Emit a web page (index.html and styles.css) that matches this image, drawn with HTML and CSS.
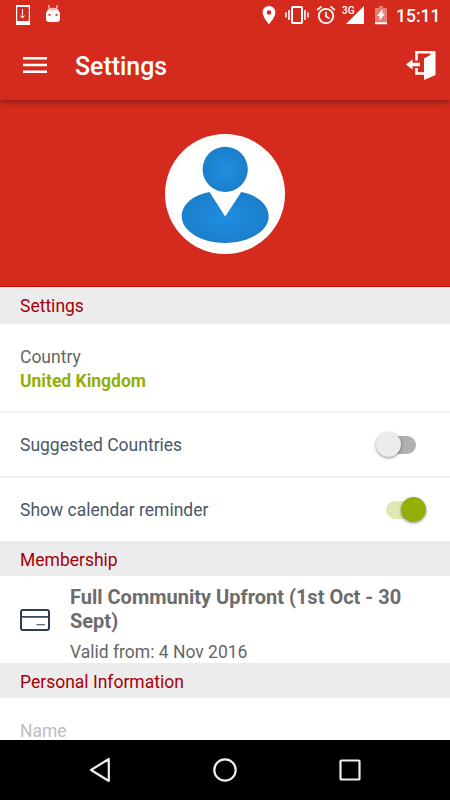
FILE: index.html
```html
<!DOCTYPE html>
<html lang="en">
<head>
<meta charset="utf-8">
<title>Settings</title>
<link rel="stylesheet" href="styles.css">
</head>
<body>
<div class="screen">
  <header class="top">
    <div class="status">
      <svg class="s-download" width="16" height="22" viewBox="0 0 16 22"><path fill="#fff" fill-rule="evenodd" d="M1 1h14v20H1zM2.200 3v14h11.600V3z"/><path stroke="#fff" stroke-width="1.100" d="M7.500 5v6.500"/><path fill="#fff" d="M4.800 11.200l2.700 1 2.700-1-2.700 3.200z"/></svg>
      <svg class="s-robot" width="16" height="20" viewBox="0 0 16 20"><path d="M3.500 1l1.200 4M12.500 1l-1.200 4" stroke="#f6c8c4" stroke-width="1.300"/><path fill="#fff" d="M3 5.500Q8 2.600 13 5.500L15 9v5.500Q15 18 11.500 18h-7Q1 18 1 14.500V9z"/><path fill="#f4b9b4" d="M3.500 5Q8 2.600 12.500 5v1.500h-9z"/><path fill="#d52b1e" d="M3.500 10h2v1.700h-2zM10.500 10h2v1.700h-2z"/></svg>
      <span class="fill"></span>
      <svg class="s-pin" width="14" height="20" viewBox="0 0 14 20"><path fill="#fff" fill-rule="evenodd" d="M7 1a6.400 6.400 0 0 0-6.400 6.400C.6 12 7 19.200 7 19.200S13.400 12 13.400 7.400A6.400 6.400 0 0 0 7 1zm0 4.200a2.300 2.300 0 1 1 0 4.600 2.300 2.300 0 0 1 0-4.600z"/></svg>
      <svg class="s-vibrate" width="24" height="20" viewBox="0 0 24 20"><rect x="7" y="2" width="10" height="16" rx=".7" fill="none" stroke="#fff" stroke-width="2"/><path stroke="#fff" stroke-width="1.600" d="M4 5v10M1 7.500v5M20 5v10M23 7.500v5"/></svg>
      <svg class="s-alarm" width="20" height="20" viewBox="0 0 20 20"><circle cx="10" cy="11" r="7.200" fill="none" stroke="#fff" stroke-width="1.800"/><path d="M10 6.800v4.700l3.500 2M1.200 5l4.300-3.600M18.800 5l-4.300-3.600" fill="none" stroke="#fff" stroke-width="1.700"/></svg>
      <span class="signal"><span class="net">3G</span><svg width="18" height="18" viewBox="0 0 18 18"><path fill="#fff" d="M18 0v18H0z"/></svg></span>
      <svg class="s-battery" width="12" height="19" viewBox="0 0 12 19"><path fill="#e77e76" d="M4 0h4v2h4v15H0V2h4z"/><path fill="#fff" d="M0 16.200h12V18.200H0zM7.500 3.200v4.600H10l-5.400 6.800V10H2z"/></svg>
      <span class="time">15:11</span>
    </div>
    <div class="bar">
      <svg class="menu" width="24" height="18" viewBox="0 0 24 18"><path stroke="#fff" stroke-width="2.400" d="M0 2.200h24M0 9h24M0 15.800h24"/></svg>
      <h1>Settings</h1>
      <svg class="exit" width="30" height="30" viewBox="0 0 30 30"><path fill="none" stroke="#fff" stroke-width="2.600" d="M10.500 10.500V2.300H28M10.500 18v5.500H18"/><path fill="#fff" d="M18 8.500L24.500 5V2.500L29.500 1v24L18 30zM0 14.500L6.500 9.500v3.300h7.500v3.400H6.500v3.300z"/></svg>
    </div>
  </header>
  <section class="hero">
    <div class="avatar">
      <svg width="120" height="120" viewBox="0 0 120 120">
        <defs><radialGradient id="blue"><stop offset="0" stop-color="#208ee0"/><stop offset="1" stop-color="#1b7fcb"/></radialGradient></defs>
        <circle cx="60" cy="60" r="56.500" fill="none" stroke="#f5eded" stroke-width=".6"/>
        <circle cx="60.200" cy="35.300" r="22.600" fill="url(#blue)"/>
        <path fill="url(#blue)" d="M44.500 58L60.200 82.500 76.200 58C93 61 103.700 71 103.700 82.500 103.700 97 84 109 60.200 109S16.700 97 16.700 82.500C16.700 71 27.500 61 44.500 58z"/>
      </svg>
    </div>
  </section>
  <main>
    <h2 class="first">Settings</h2>
    <div class="row country"><span>Country</span><strong>United Kingdom</strong></div>
    <div class="row option"><span>Suggested Countries</span><span class="switch off"><i></i></span></div>
    <div class="row option last"><span>Show calendar reminder</span><span class="switch on"><i></i></span></div>
    <h2>Membership</h2>
    <div class="member">
      <svg width="30" height="22" viewBox="0 0 30 22"><rect x="1" y="1" width="28" height="20" rx="2" fill="none" stroke="#2d3e50" stroke-width="2"/><path fill="none" stroke="#3b4a5b" stroke-width="1.800" d="M1 7.900h28"/><path stroke="#526070" stroke-width="1.200" d="M16.500 15.700H25"/></svg>
      <div class="details"><strong>Full Community Upfront (1st Oct - 30 Sept)</strong><span>Valid from: 4 Nov 2016</span></div>
    </div>
    <h2>Personal Information</h2>
    <div class="name">Name</div>
  </main>
  <nav>
    <svg width="26" height="26" viewBox="0 0 26 26"><path d="M21.800 2v22L4 13z" fill="none" stroke="#eee" stroke-width="2.200" stroke-linejoin="round"/></svg>
    <svg width="26" height="26" viewBox="0 0 26 26"><circle cx="13" cy="13" r="10.700" fill="none" stroke="#eee" stroke-width="2.200"/></svg>
    <svg width="26" height="26" viewBox="0 0 26 26"><rect x="3.500" y="3.500" width="19" height="19" rx=".8" fill="none" stroke="#eee" stroke-width="2.200"/></svg>
  </nav>
</div>
</body>
</html>
```

FILE: styles.css
```css
* { box-sizing: border-box; }
body { margin: 0; font-family: Roboto, "Liberation Sans", sans-serif; }
svg { display: block; flex: none; }
.screen { width: 450px; height: 800px; display: flex; flex-direction: column; overflow: hidden; background: #fff; }

.top { position: relative; z-index: 1; height: 100px; flex: none; background: #d52b1e; color: #fff; box-shadow: 0 2px 7px rgba(0, 0, 0, .4); }
.status { height: 30px; display: flex; align-items: flex-start; padding: 4px 0 0 15px; }
.s-robot { margin-left: 14px; }
.fill { flex: 1; }
.s-pin { margin: 1px 9px 0 0; }
.s-vibrate { margin: 1px 7px 0 0; }
.s-alarm { margin: 1px 6px 0 0; }
.signal { position: relative; width: 22px; height: 20px; padding: 2px 0 0 4px; margin-right: 11px; }
.net { position: absolute; left: 0; top: 2px; font-size: 10px; line-height: 10px; font-weight: 500; }
.s-battery { margin: 2px 9px 0 0; }
.time { width: 54px; font-size: 17.5px; font-weight: 500; line-height: 24px; }

.bar { height: 70px; display: flex; align-items: center; padding: 0 14px 0 23px; }
h1 { margin: 3px 0 0 28px; flex: 1; font-size: 24.9px; line-height: 30px; font-weight: 500; }
.exit { margin-top: -1px; }

.hero { height: 187px; flex: none; background: #d52b1e; padding-top: 34px; border-bottom: 1px solid #c80d05; }
.avatar { width: 120px; height: 120px; margin: 0 auto; border-radius: 50%; background: #fff; }

main { flex: 1; overflow: hidden; }
h2 { margin: 0; height: 35px; padding: 1px 0 0 20px; background: #ececec; color: #a50008; font-size: 17.5px; line-height: 36px; font-weight: 400; }
h2.first { height: 37px; line-height: 37px; }
.row { padding: 0 20px; border-bottom: 2px solid #f0f0f0; font-size: 17.5px; }
.country { height: 89px; padding-top: 21px; display: flex; flex-direction: column; line-height: 24px; color: #666; }
.country strong { color: #95ae08; }
.option { height: 65px; display: flex; align-items: center; justify-content: space-between; color: #4a5766; }
.option > span:first-child { padding-top: 1px; }
.last { height: 63px; border-bottom: 0; }
.switch { position: relative; width: 30px; height: 18px; border-radius: 9px; }
.switch i { position: absolute; top: -4px; width: 25px; height: 25px; border-radius: 50%; box-shadow: 0 1px 3px rgba(0, 0, 0, .45); }
.off { background: #b0b0b0; margin-right: 14px; }
.off i { left: -10px; background: #ececec; }
.on { background: #dfe7b3; margin-right: 14px; }
.on i { right: -10px; background: #95ae08; }

.member { height: 87px; display: flex; padding-left: 20px; }
.member svg { margin: 33px 20px 0 0; }
.details { width: 345px; padding-top: 9px; color: #6c6c6c; }
.details strong { display: block; font-size: 20px; line-height: 24px; }
.details span { display: block; margin-top: 7px; font-size: 17.5px; line-height: 24px; color: #666; }
.name { padding: 21px 20px 0; font-size: 17.5px; line-height: 24px; color: #bdbdbd; }

nav { height: 60px; flex: none; background: #000; display: flex; align-items: center; justify-content: center; gap: 99px; }
```
